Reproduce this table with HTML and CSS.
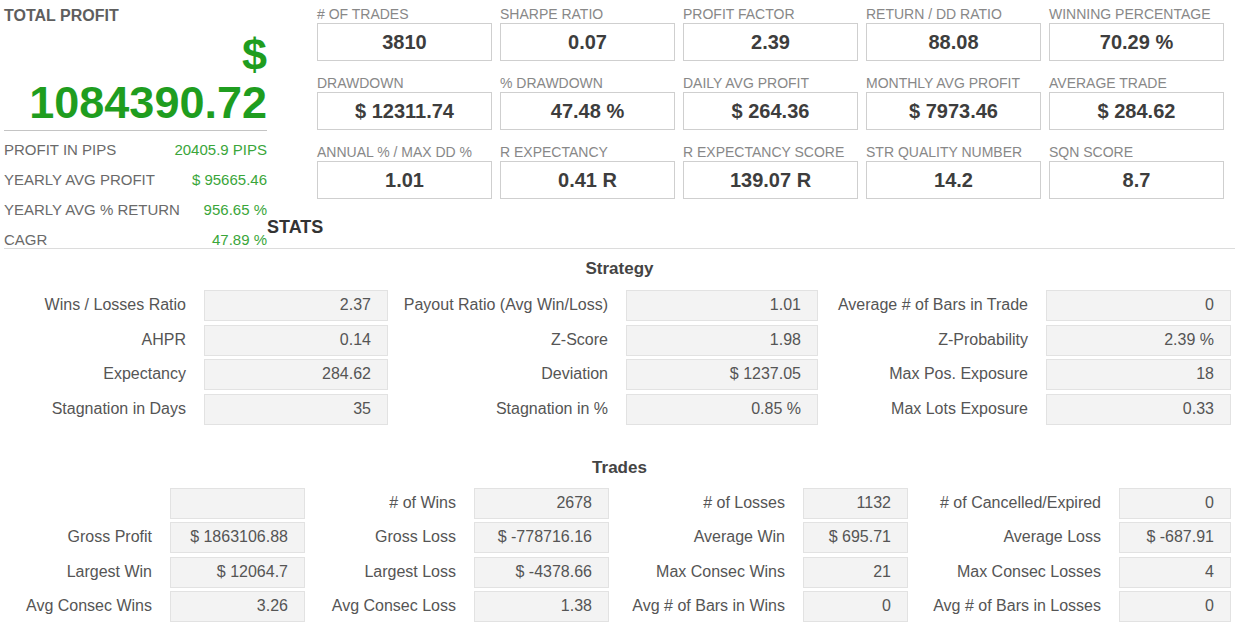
FILE: index.html
```html
<!DOCTYPE html>
<html>
<head>
<meta charset="utf-8">
<link rel="stylesheet" href="styles.css">
</head>
<body>
<div class="page">
  <section class="top">
    <div class="profit">
      <div class="profit-title">TOTAL PROFIT</div>
      <div class="profit-big">$ 1084390.72</div>
      <div class="profit-rows">
        <div class="prow"><span>PROFIT IN PIPS</span><span class="green">20405.9 PIPS</span></div>
        <div class="prow"><span>YEARLY AVG PROFIT</span><span class="green">$ 95665.46</span></div>
        <div class="prow"><span>YEARLY AVG % RETURN</span><span class="green">956.65 %</span></div>
        <div class="prow"><span>CAGR</span><span class="green">47.89 %</span></div>
      </div>
    </div>
    <div class="right">
      <div class="cards">
        <div class="card"><div class="card-label"># OF TRADES</div><div class="card-box">3810</div></div>
        <div class="card"><div class="card-label">SHARPE RATIO</div><div class="card-box">0.07</div></div>
        <div class="card"><div class="card-label">PROFIT FACTOR</div><div class="card-box">2.39</div></div>
        <div class="card"><div class="card-label">RETURN / DD RATIO</div><div class="card-box">88.08</div></div>
        <div class="card"><div class="card-label">WINNING PERCENTAGE</div><div class="card-box">70.29 %</div></div>
        <div class="card"><div class="card-label">DRAWDOWN</div><div class="card-box">$ 12311.74</div></div>
        <div class="card"><div class="card-label">% DRAWDOWN</div><div class="card-box">47.48 %</div></div>
        <div class="card"><div class="card-label">DAILY AVG PROFIT</div><div class="card-box">$ 264.36</div></div>
        <div class="card"><div class="card-label">MONTHLY AVG PROFIT</div><div class="card-box">$ 7973.46</div></div>
        <div class="card"><div class="card-label">AVERAGE TRADE</div><div class="card-box">$ 284.62</div></div>
        <div class="card"><div class="card-label">ANNUAL % / MAX DD %</div><div class="card-box">1.01</div></div>
        <div class="card"><div class="card-label">R EXPECTANCY</div><div class="card-box">0.41 R</div></div>
        <div class="card"><div class="card-label">R EXPECTANCY SCORE</div><div class="card-box">139.07 R</div></div>
        <div class="card"><div class="card-label">STR QUALITY NUMBER</div><div class="card-box">14.2</div></div>
        <div class="card"><div class="card-label">SQN SCORE</div><div class="card-box">8.7</div></div>
      </div>
      <h3 class="stats-title">STATS</h3>
    </div>
  </section>

  <h4 class="section-title strategy-title">Strategy</h4>
  <div class="grid strategy">
    <div class="lbl">Wins / Losses Ratio</div><div class="val">2.37</div>
    <div class="lbl">Payout Ratio (Avg Win/Loss)</div><div class="val">1.01</div>
    <div class="lbl">Average # of Bars in Trade</div><div class="val">0</div>
    <div class="lbl">AHPR</div><div class="val">0.14</div>
    <div class="lbl">Z-Score</div><div class="val">1.98</div>
    <div class="lbl">Z-Probability</div><div class="val">2.39 %</div>
    <div class="lbl">Expectancy</div><div class="val">284.62</div>
    <div class="lbl">Deviation</div><div class="val">$ 1237.05</div>
    <div class="lbl">Max Pos. Exposure</div><div class="val">18</div>
    <div class="lbl">Stagnation in Days</div><div class="val">35</div>
    <div class="lbl">Stagnation in %</div><div class="val">0.85 %</div>
    <div class="lbl">Max Lots Exposure</div><div class="val">0.33</div>
  </div>

  <h4 class="section-title trades-title">Trades</h4>
  <div class="grid trades">
    <div class="lbl"></div><div class="val"></div>
    <div class="lbl"># of Wins</div><div class="val">2678</div>
    <div class="lbl"># of Losses</div><div class="val">1132</div>
    <div class="lbl"># of Cancelled/Expired</div><div class="val">0</div>
    <div class="lbl">Gross Profit</div><div class="val">$ 1863106.88</div>
    <div class="lbl">Gross Loss</div><div class="val">$ -778716.16</div>
    <div class="lbl">Average Win</div><div class="val">$ 695.71</div>
    <div class="lbl">Average Loss</div><div class="val">$ -687.91</div>
    <div class="lbl">Largest Win</div><div class="val">$ 12064.7</div>
    <div class="lbl">Largest Loss</div><div class="val">$ -4378.66</div>
    <div class="lbl">Max Consec Wins</div><div class="val">21</div>
    <div class="lbl">Max Consec Losses</div><div class="val">4</div>
    <div class="lbl">Avg Consec Wins</div><div class="val">3.26</div>
    <div class="lbl">Avg Consec Loss</div><div class="val">1.38</div>
    <div class="lbl">Avg # of Bars in Wins</div><div class="val">0</div>
    <div class="lbl">Avg # of Bars in Losses</div><div class="val">0</div>
  </div>
</div>
</body>
</html>
```

FILE: styles.css
```css
* { box-sizing: border-box; }
html, body { margin: 0; padding: 0; background: #fff; }
body {
  font-family: "Liberation Sans", Arial, sans-serif;
  color: #555;
}
.page {
  width: 1237px;
  padding: 0 2px 0 4px;
}
.top {
  display: flex;
  padding-top: 6px;
  border-bottom: 1px solid #dcdcdc;
  height: 249px;
}
.profit {
  width: 263px;
  flex: none;
}
.profit-title {
  font-size: 16px;
  font-weight: bold;
  line-height: 20px;
  color: #5e5e5e;
}
.profit-big {
  margin-top: 5px;
  text-align: right;
  font-size: 45px;
  font-weight: bold;
  line-height: 48px;
  color: #1f9d1f;
  padding-bottom: 3px;
  border-bottom: 1px solid #c4c4c4;
}
.profit-rows {
  margin-top: 11px;
  display: flex;
  flex-direction: column;
  gap: 14px;
}
.prow {
  display: flex;
  justify-content: space-between;
  font-size: 15px;
  line-height: 16px;
  color: #6a6a6a;
}
.green { color: #3aa63a; }
.right {
  flex: 1;
  display: flex;
  flex-direction: column;
}
.cards {
  margin-left: 50px;
  display: grid;
  grid-template-columns: repeat(5, 175px);
  column-gap: 8px;
  row-gap: 14px;
}
.card-label {
  font-size: 14px;
  line-height: 16px;
  color: #888;
  white-space: nowrap;
  margin-bottom: 1px;
}
.card-box {
  height: 38px;
  border: 1px solid #cfcfcf;
  background: #fff;
  text-align: center;
  font-size: 20px;
  font-weight: bold;
  line-height: 36px;
  color: #3d3d3d;
}
.stats-title {
  margin: 18px 0 0 0;
  font-size: 18px;
  line-height: 20px;
  font-weight: bold;
  color: #333;
}
.section-title {
  margin: 0;
  text-align: center;
  font-size: 17px;
  line-height: 20px;
  font-weight: bold;
  color: #444;
}
.strategy-title { margin-top: 10px; margin-bottom: 11px; }
.trades-title { margin-top: 33px; margin-bottom: 10px; }
.grid {
  display: grid;
  row-gap: 3.5px;
}
.strategy {
  grid-template-columns: 200px 184px 238px 192px 228px 185px;
}
.trades {
  grid-template-columns: 166px 135px 169px 135px 194px 105px 211px 112px;
}
.lbl {
  height: 31px;
  line-height: 30px;
  text-align: right;
  padding-right: 18px;
  font-size: 16px;
  color: #555;
  white-space: nowrap;
}
.val {
  height: 31px;
  line-height: 28px;
  text-align: right;
  padding-right: 16px;
  font-size: 16px;
  color: #555;
  background: #f3f3f3;
  border: 1px solid #e2e2e2;
  white-space: nowrap;
}
```
